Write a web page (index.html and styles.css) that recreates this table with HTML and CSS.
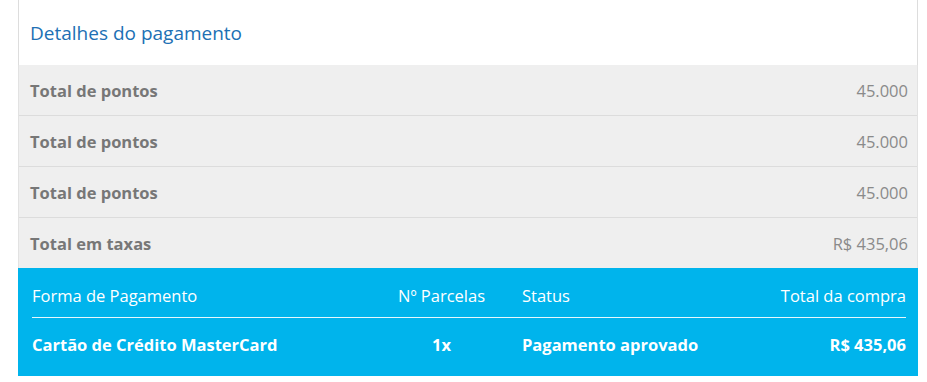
FILE: index.html
```html
<!DOCTYPE html>
<html lang="pt-BR">
<head>
<meta charset="utf-8">
<title>Detalhes do pagamento</title>
<link rel="stylesheet" href="styles.css">
</head>
<body>
<div class="panel">
  <div class="panel-head">Detalhes do pagamento</div>
  <div class="rows">
    <div class="row"><span class="label">Total de pontos</span><span class="value">45.000</span></div>
    <div class="row"><span class="label">Total de pontos</span><span class="value">45.000</span></div>
    <div class="row"><span class="label">Total de pontos</span><span class="value">45.000</span></div>
    <div class="row"><span class="label">Total em taxas</span><span class="value">R$ 435,06</span></div>
  </div>
  <div class="summary">
    <div class="grid head">
      <div class="c1">Forma de Pagamento</div>
      <div class="c2">Nº Parcelas</div>
      <div class="c3">Status</div>
      <div class="c4">Total da compra</div>
    </div>
    <div class="grid data">
      <div class="c1">Cartão de Crédito MasterCard</div>
      <div class="c2">1x</div>
      <div class="c3">Pagamento aprovado</div>
      <div class="c4">R$ 435,06</div>
    </div>
  </div>
</div>
</body>
</html>
```
FILE: styles.css
```css
* { box-sizing: border-box; }
body {
  margin: 0;
  background: #fff;
  font-family: "Open Sans", "Segoe UI", sans-serif;
}
.panel {
  width: 900px;
  margin-left: 18px;
}
.panel-head {
  height: 65px;
  border-left: 1px solid #dddddd;
  border-right: 1px solid #dddddd;
  padding: 0 11px;
  display: flex;
  align-items: center;
  font-size: 19px;
  color: #2070b4;
}
.rows {
  background: #efefef;
  border-left: 1px solid #e2e2e2;
  border-right: 1px solid #e2e2e2;
}
.row {
  height: 51px;
  display: flex;
  align-items: center;
  justify-content: space-between;
  padding: 0 9px 0 11px;
  border-bottom: 1px solid #dcdcdc;
  font-size: 16.5px;
}
.row:last-child { height: 50px; border-bottom: none; }
.label { font-weight: 700; color: #777777; }
.value { color: #8a8a8a; }
.summary {
  background: #00b4ec;
  color: #ffffff;
  padding: 14px 12px 0 14px;
  height: 108px;
}
.grid {
  display: grid;
  grid-template-columns: 361px 97px 1fr auto;
  font-size: 16.5px;
}
.grid.head {
  line-height: 22px;
  padding: 3px 0 10px;
  border-bottom: 1px solid #e6f7fd;
}
.grid.data {
  line-height: 22px;
  padding: 16px 0 0;
  font-weight: 700;
}
.c2 { text-align: center; }
.c3 { padding-left: 32px; }
.c4 { text-align: right; }
```
